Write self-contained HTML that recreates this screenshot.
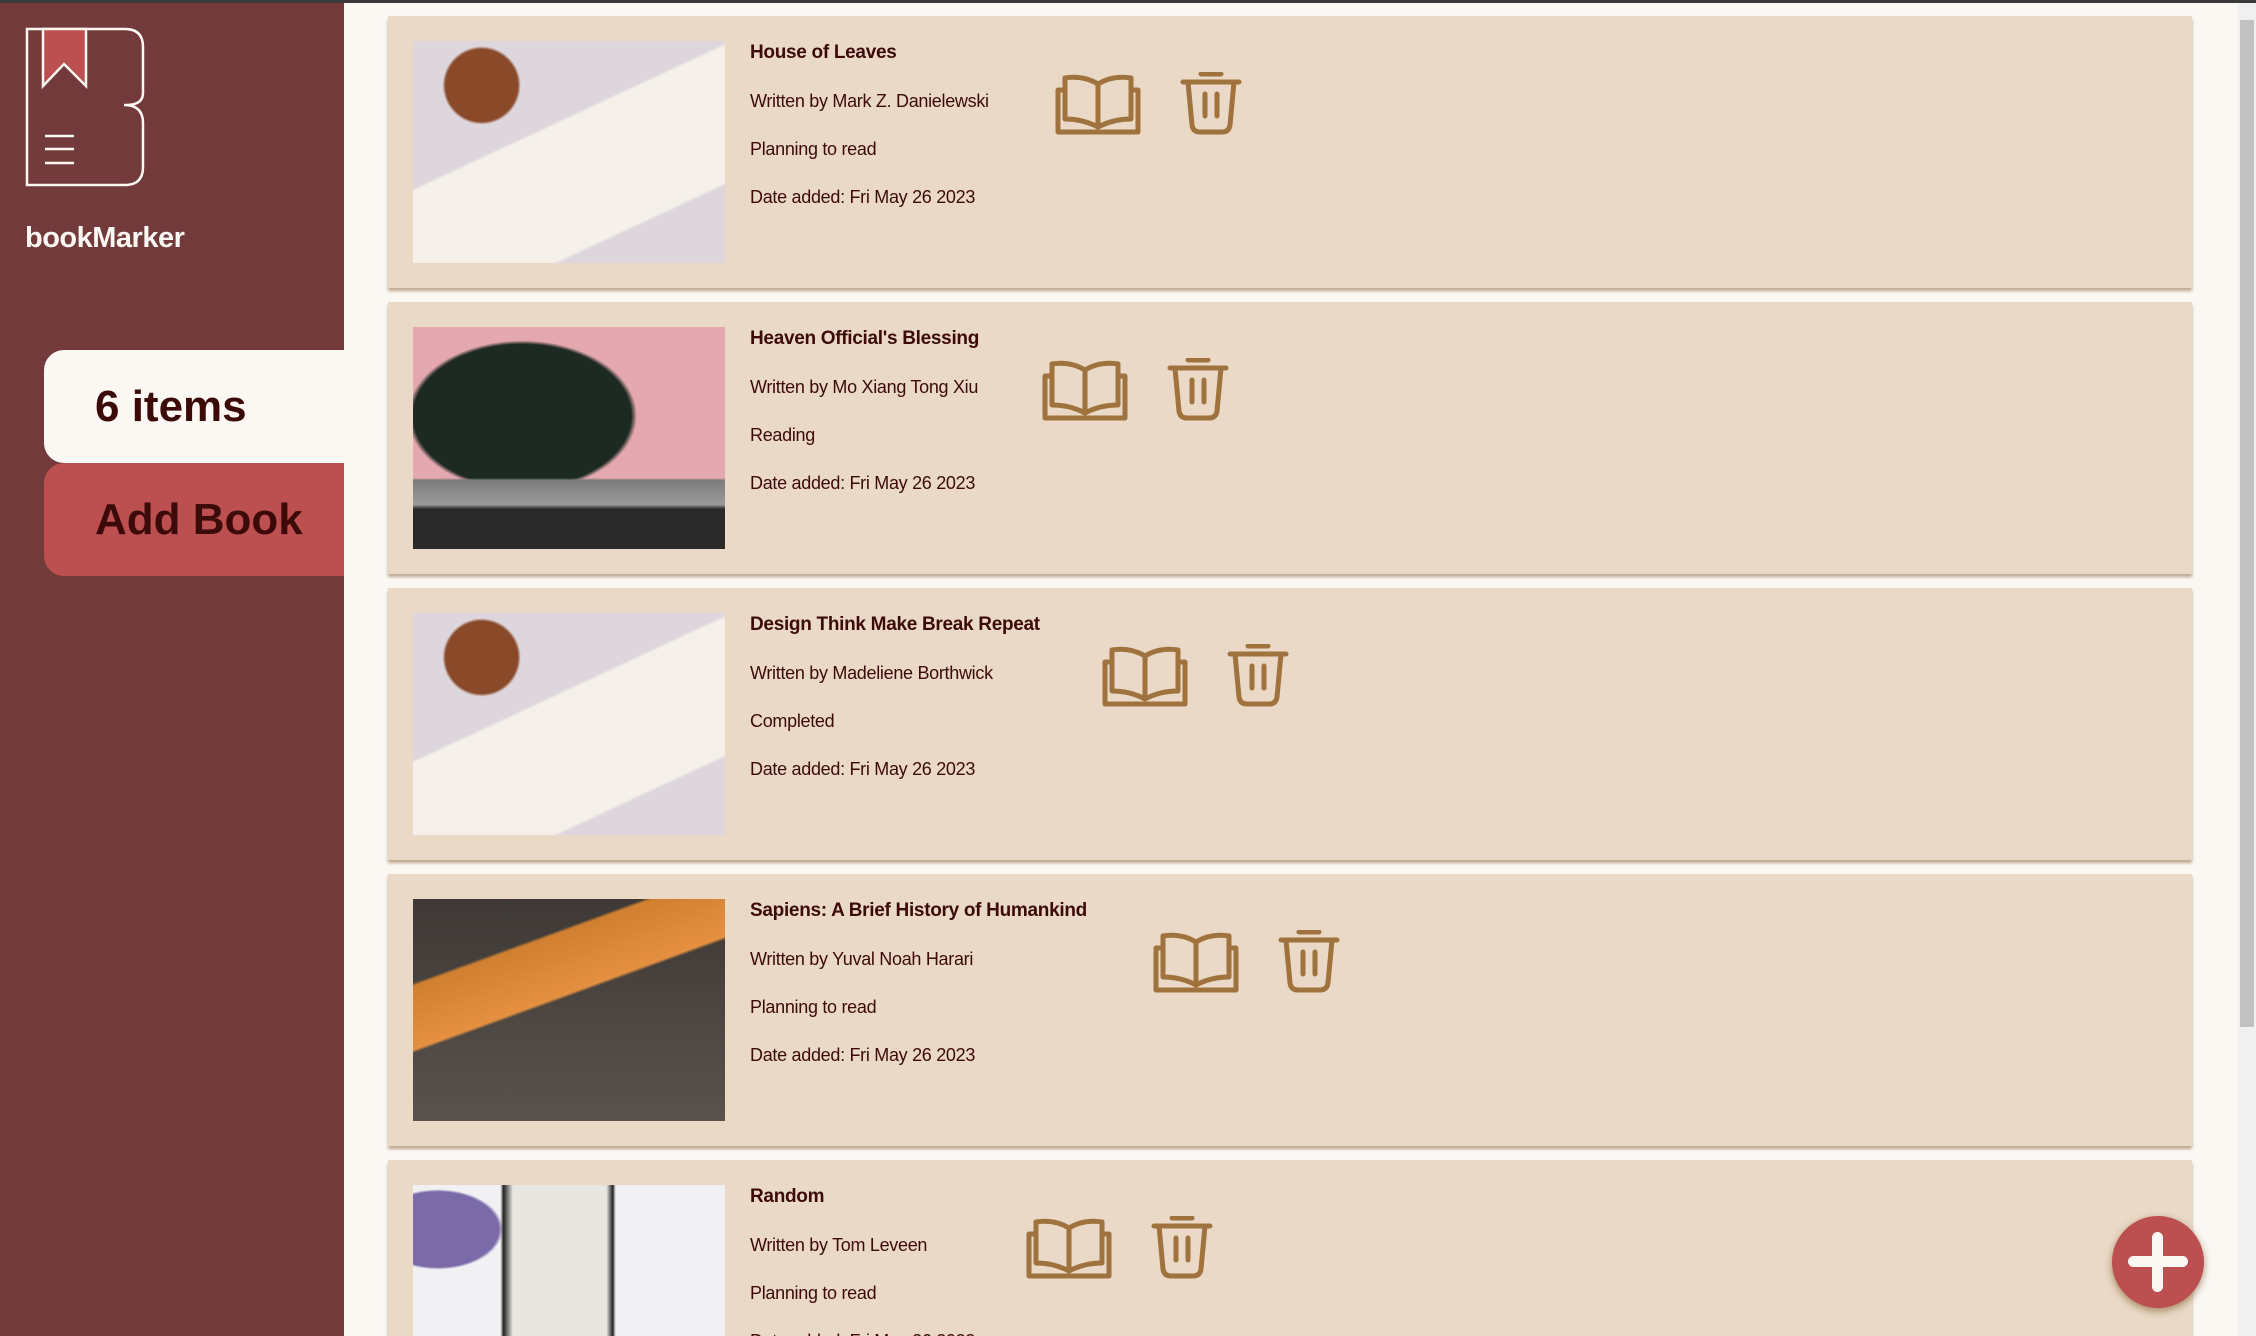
<!DOCTYPE html>
<html><head><meta charset="utf-8"><style>
*{margin:0;padding:0;box-sizing:border-box}
html,body{width:2256px;height:1336px;overflow:hidden;background:#fbf8f4;font-family:"Liberation Sans",sans-serif}
#wrap{position:relative;width:2256px;height:1336px;overflow:hidden}
.topbar{position:absolute;left:0;top:0;width:2256px;height:3px;background:#3a3a3a;z-index:5}
.side{position:absolute;left:0;top:0;width:344px;height:1336px;background:#723a3a}
.brand{position:absolute;left:25px;top:222px;color:#fbf8f4;font-weight:bold;font-size:29px;letter-spacing:-0.5px}
.tab{position:absolute;left:44px;width:300px;height:113px;border-radius:20px 0 0 20px;font-weight:bold;color:#3d0a0a;font-size:44px;padding-left:51px;line-height:113px}
.card{position:absolute;left:388px;width:1804px;height:272px;background:#e9d9c6;box-shadow:0 3px 3px rgba(140,100,60,.55);overflow:hidden}
.img{position:absolute;left:25px;top:25px;width:312px;height:222px}
.txt{position:absolute;left:362px;top:24px;color:#3d0a0a;font-size:18px;letter-spacing:-0.3px}
.txt div{height:48px;line-height:26px}
.txt .t{font-weight:bold;font-size:19px}
.ic{position:absolute;top:56px}
.fab{position:absolute;left:2112px;top:1216px;width:92px;height:92px;border-radius:50%;background:#bc4f4f;box-shadow:0 3px 8px rgba(120,80,30,.6)}
.fab:before{content:"";position:absolute;left:16px;top:40px;width:60px;height:11px;border-radius:6px;background:#fbf8f4}
.fab:after{content:"";position:absolute;left:40px;top:16px;width:11px;height:60px;border-radius:6px;background:#fbf8f4}
.sb{position:absolute;left:2238px;top:0;width:18px;height:1336px;background:#f0f0f0}
.th{position:absolute;left:2240px;top:20px;width:14px;height:1007px;background:#c1c1c1}
</style></head><body><div id="wrap">
<div class="topbar"></div>
<div class="side">
<svg style="position:absolute;left:25px;top:27px" width="120" height="160" viewBox="0 0 120 160">
<path d="M2 2H100Q118 2 118 20V66Q118 78 101 78H99Q118 78 118 96V140Q118 158 100 158H2Z" fill="none" stroke="#fbf8f4" stroke-width="2.5"/>
<path d="M18 2V59L39 37L61 59V2Z" fill="#bc4f4f" stroke="#fbf8f4" stroke-width="2.5"/>
<path d="M20 109H49M20 122H49M20 136H49" stroke="#fbf8f4" stroke-width="2.5"/>
</svg>
<div class="brand">bookMarker</div>
</div>
<div class="tab" style="top:350px;background:#fbf8f4">6 items</div>
<div class="tab" style="top:463px;background:#bc4f4f">Add Book</div>

<svg width="0" height="0" style="position:absolute"><defs>
<g id="bk" fill="none" stroke="#a0733e" stroke-width="5" stroke-linejoin="round" stroke-linecap="round"><path d="M10 18H3V60H83V18H76"/><path d="M10 6Q28 3 43 12V55Q28 47 10 47Z"/><path d="M76 6Q58 3 43 12V55Q58 47 76 47Z"/></g>
<g id="tr" fill="none" stroke="#a0733e" stroke-width="5" stroke-linecap="round" stroke-linejoin="round"><path d="M3 10H59M21 2H41"/><path d="M8 10L12 53Q13 60 20 60H42Q49 60 50 53L54 10"/><path d="M25 22V44M37 22V44"/></g>
</defs></svg>

<div class="card" style="top:16px">
<div class="img" style="background:radial-gradient(circle at 22% 20%,#8a4a2a 0 12%,transparent 13%),linear-gradient(155deg,transparent 40%,#f5f0ea 41%,#f5f0ea 78%,transparent 79%),#ddd6dc"></div>
<div class="txt"><div class="t">House of Leaves</div><div>Written by Mark Z. Danielewski</div><div>Planning to read</div><div>Date added: Fri May 26 2023</div></div>
<svg class="ic" style="left:667px" width="86" height="64"><use href="#bk"/></svg>
<svg class="ic" style="left:792px" width="62" height="64"><use href="#tr"/></svg>
</div>
<div class="card" style="top:302px">
<div class="img" style="background:linear-gradient(180deg,transparent 68%,#7c7c7c 69%,#9a9a9a 80%,#2a2a2a 82%),radial-gradient(ellipse at 35% 40%,#1d2a22 0 38%,transparent 40%),#e5a8b0"></div>
<div class="txt"><div class="t">Heaven Official's Blessing</div><div>Written by Mo Xiang Tong Xiu</div><div>Reading</div><div>Date added: Fri May 26 2023</div></div>
<svg class="ic" style="left:654px" width="86" height="64"><use href="#bk"/></svg>
<svg class="ic" style="left:779px" width="62" height="64"><use href="#tr"/></svg>
</div>
<div class="card" style="top:588px">
<div class="img" style="background:radial-gradient(circle at 22% 20%,#8a4a2a 0 12%,transparent 13%),linear-gradient(155deg,transparent 40%,#f5f0ea 41%,#f5f0ea 78%,transparent 79%),#ddd6dc"></div>
<div class="txt"><div class="t">Design Think Make Break Repeat</div><div>Written by Madeliene Borthwick</div><div>Completed</div><div>Date added: Fri May 26 2023</div></div>
<svg class="ic" style="left:714px" width="86" height="64"><use href="#bk"/></svg>
<svg class="ic" style="left:839px" width="62" height="64"><use href="#tr"/></svg>
</div>
<div class="card" style="top:874px">
<div class="img" style="background:linear-gradient(160deg,transparent 25%,#d08030 26%,#e59040 45%,transparent 46%),linear-gradient(180deg,#3e3936,#5a524c)"></div>
<div class="txt"><div class="t">Sapiens: A Brief History of Humankind</div><div>Written by Yuval Noah Harari</div><div>Planning to read</div><div>Date added: Fri May 26 2023</div></div>
<svg class="ic" style="left:765px" width="86" height="64"><use href="#bk"/></svg>
<svg class="ic" style="left:890px" width="62" height="64"><use href="#tr"/></svg>
</div>
<div class="card" style="top:1160px;height:176px">
<div class="img" style="background:linear-gradient(90deg,transparent 28%,#222 29%,#e8e6e0 32%,#e8e6e0 62%,#222 64%,transparent 65%),radial-gradient(ellipse at 8% 20%,#7a6aa8 0 15%,transparent 16%),#f1f1f3"></div>
<div class="txt"><div class="t">Random</div><div>Written by Tom Leveen</div><div>Planning to read</div><div>Date added: Fri May 26 2023</div></div>
<svg class="ic" style="left:638px" width="86" height="64"><use href="#bk"/></svg>
<svg class="ic" style="left:763px" width="62" height="64"><use href="#tr"/></svg>
</div>
<div class="fab"></div>
<div class="sb"></div><div class="th"></div>
</div></body></html>
